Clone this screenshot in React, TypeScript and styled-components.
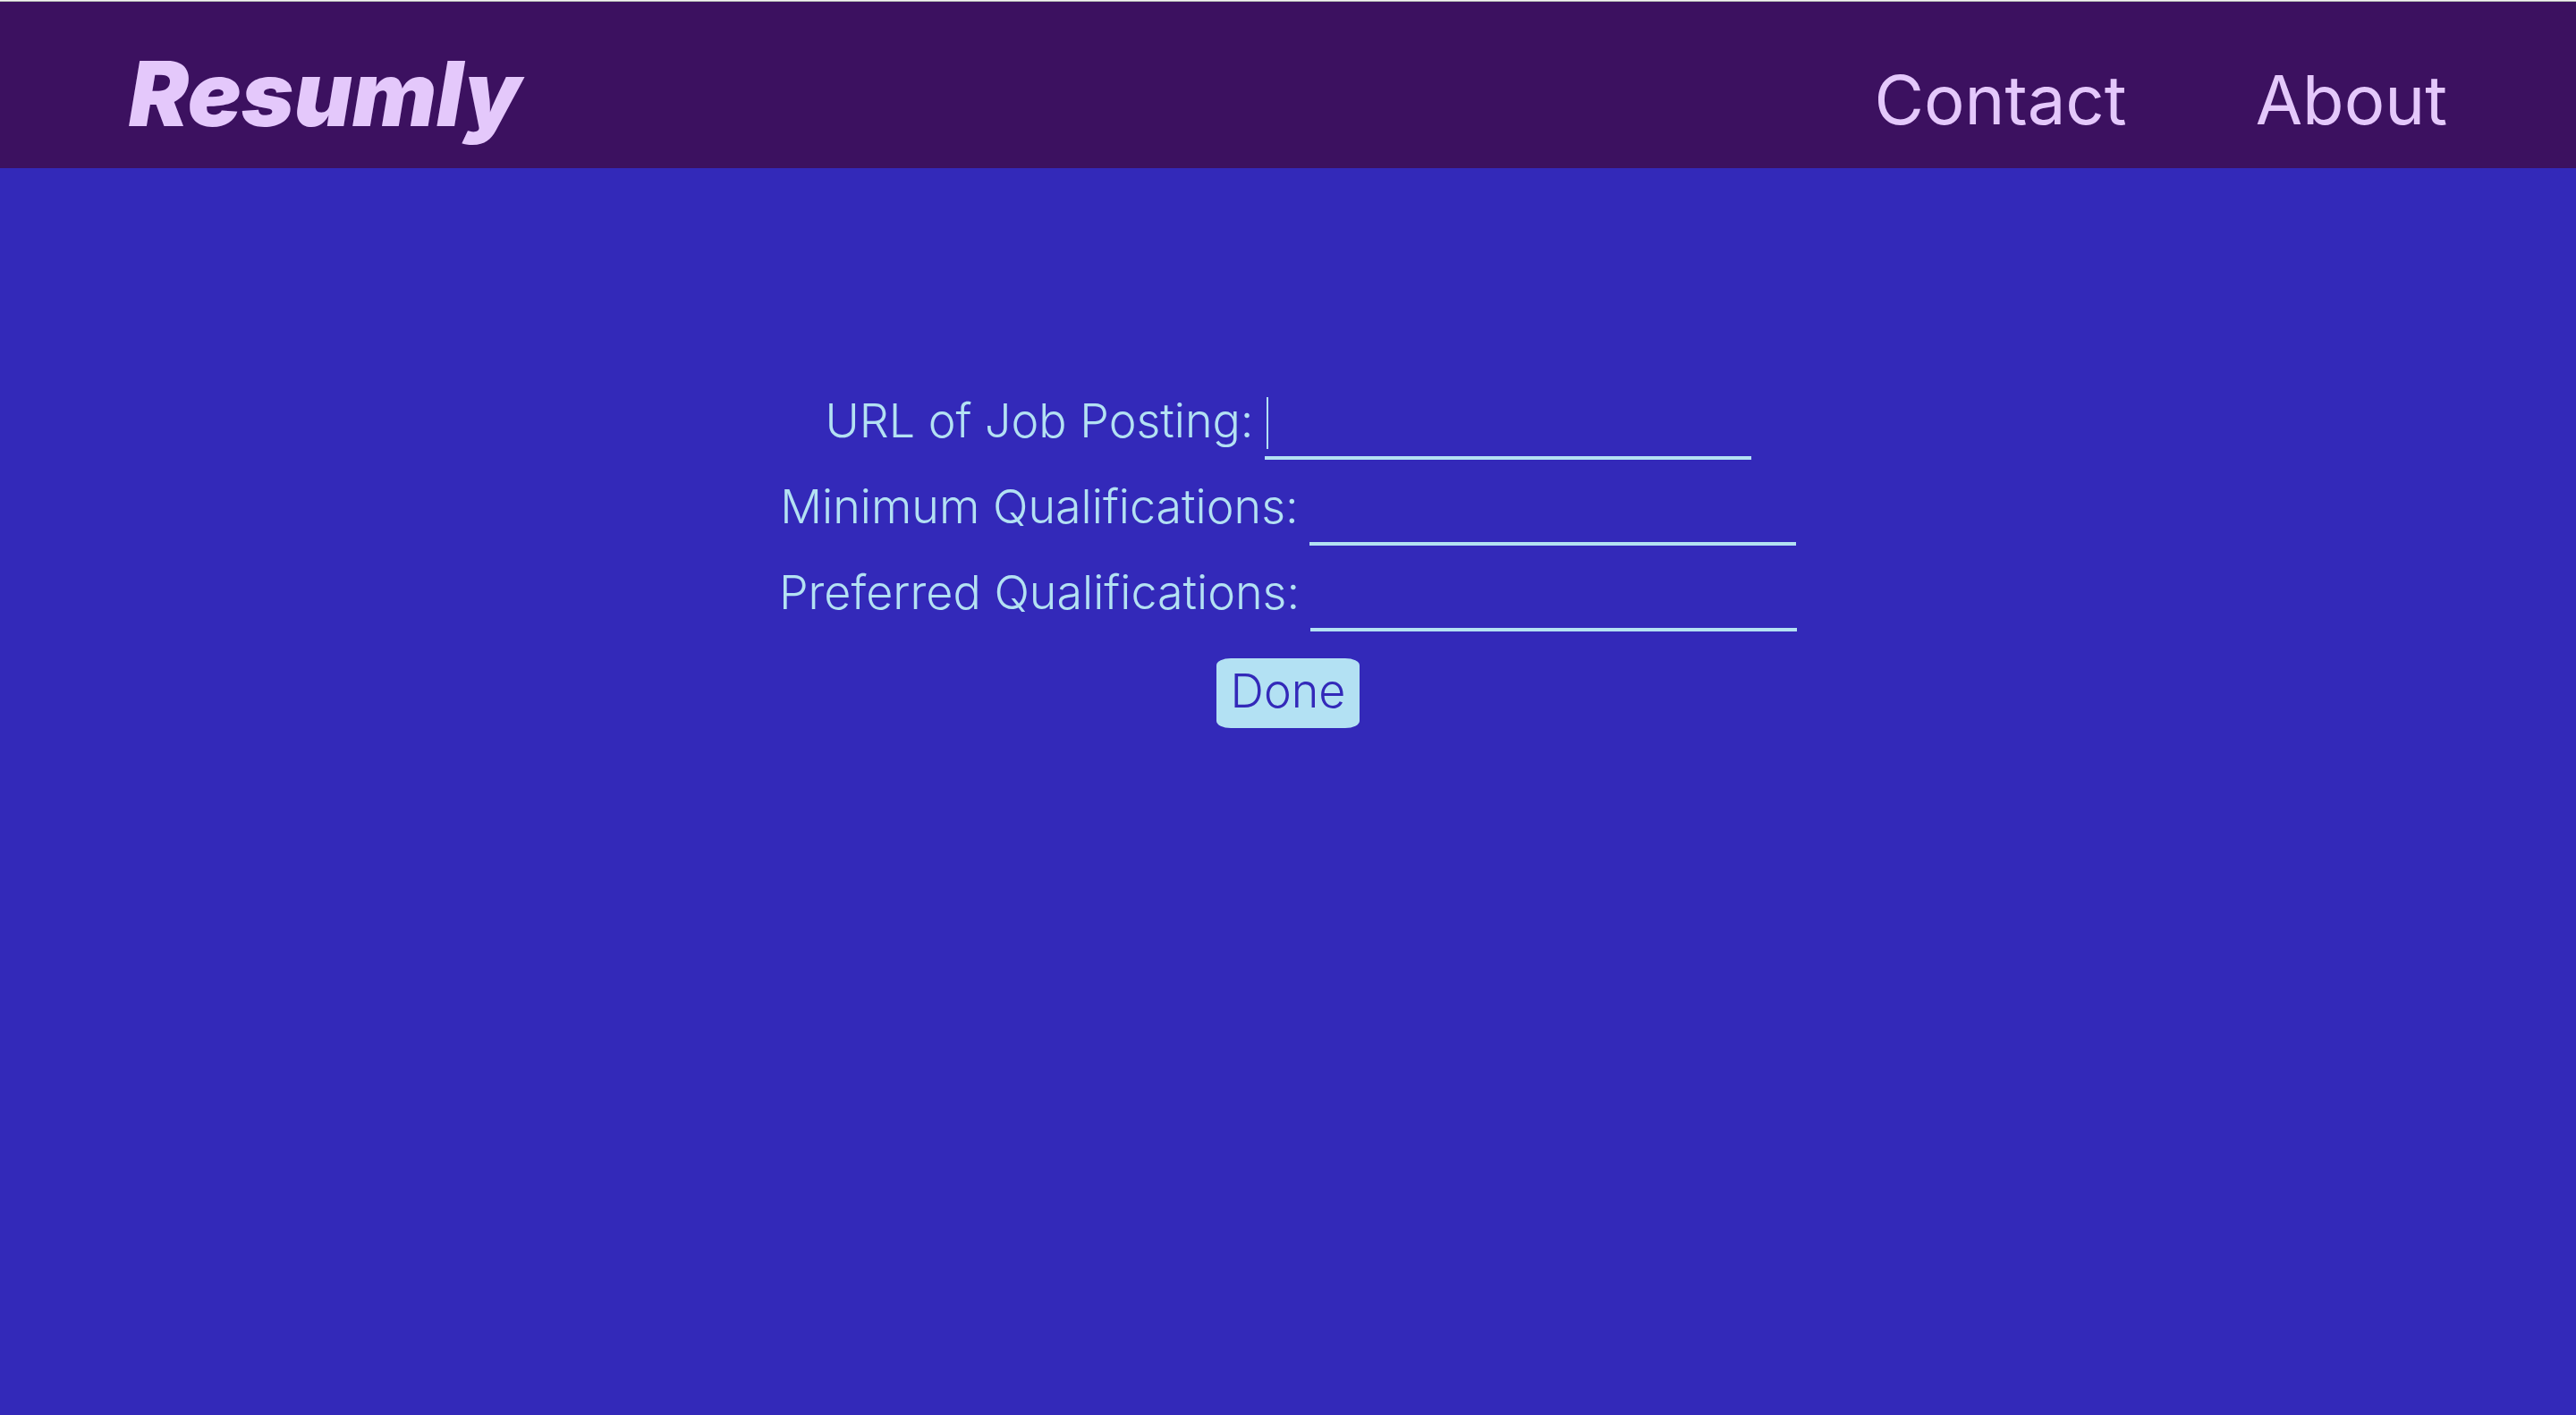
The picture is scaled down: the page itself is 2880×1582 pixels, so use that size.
import React from "react";
import styled, { createGlobalStyle } from "styled-components";

const colors = {
  header: "#3c1160",
  page: "#3329b9",
  lilac: "#e4c8fb",
  sky: "#b3e1f3",
};

const GlobalStyle = createGlobalStyle`
  *, *::before, *::after { box-sizing: border-box; }
  body {
    margin: 0;
    min-height: 100vh;
    background: ${colors.page};
    font-family: Inter, "Open Sans", sans-serif;
  }
`;

const Header = styled.header`
  display: flex;
  align-items: center;
  justify-content: space-between;
  height: 188px;
  padding: 20px 144px 0;
  border-top: 1px solid #f4f4f4;
  box-shadow: inset 0 1px 0 #b1b8b1;
  background: ${colors.header};
  color: ${colors.lilac};
`;

const Logo = styled.a`
  font-family: Inter, Roboto, sans-serif;
  font-size: 100px;
  font-style: italic;
  font-weight: 900;
  line-height: 128px;
  color: inherit;
  text-decoration: none;
`;

const Nav = styled.nav`
  display: flex;
  gap: 144px;
  padding-top: 12px;
`;

const NavLink = styled.a`
  font-size: 76px;
  line-height: 108px;
  color: inherit;
  text-decoration: none;
`;

const Form = styled.form`
  display: flex;
  flex-direction: column;
  align-items: center;
  gap: 30px;
  padding: 256px 32px 0;
  color: ${colors.sky};
`;

const Fields = styled.div`
  display: flex;
  flex-direction: column;
  align-items: center;
  gap: 26px;
`;

const Field = styled.div`
  display: flex;
  align-items: flex-start;
  gap: 12px;
`;

const Label = styled.label`
  font-size: 52px;
  font-weight: 300;
  line-height: 54px;
`;

const TextInput = styled.input<{ $active?: boolean }>`
  width: 544px;
  height: 70px;
  padding: 0 2px 8px;
  border: 0;
  border-bottom: 4px solid ${colors.sky};
  border-radius: 0;
  outline: none;
  background: ${({ $active }) =>
    $active ? `linear-gradient(${colors.sky}, ${colors.sky}) 2px 0 / 2px 58px no-repeat` : "transparent"};
  color: inherit;
  caret-color: ${colors.sky};
  font: inherit;
  font-size: 52px;
  font-weight: 300;
`;

const DoneButton = styled.button`
  padding: 10px 16px 14px;
  border: 0;
  border-radius: 16px / 8px;
  background: ${colors.sky};
  color: ${colors.page};
  font: inherit;
  font-size: 52px;
  font-weight: 300;
  line-height: 54px;
  cursor: pointer;
`;

const fields = [
  { id: "url", label: "URL of Job Posting:", active: true },
  { id: "minimum", label: "Minimum Qualifications:", active: false },
  { id: "preferred", label: "Preferred Qualifications:", active: false },
];

export default function App() {
  return (
    <>
      <GlobalStyle />
      <Header>
        <Logo href="#">Resumly</Logo>
        <Nav>
          <NavLink href="#contact">Contact</NavLink>
          <NavLink href="#about">About</NavLink>
        </Nav>
      </Header>
      <main>
        <Form onSubmit={(event) => event.preventDefault()}>
          <Fields>
            {fields.map(({ id, label, active }) => (
              <Field key={id}>
                <Label htmlFor={id}>{label}</Label>
                <TextInput id={id} name={id} type="text" $active={active} />
              </Field>
            ))}
          </Fields>
          <DoneButton type="submit">Done</DoneButton>
        </Form>
      </main>
    </>
  );
}
